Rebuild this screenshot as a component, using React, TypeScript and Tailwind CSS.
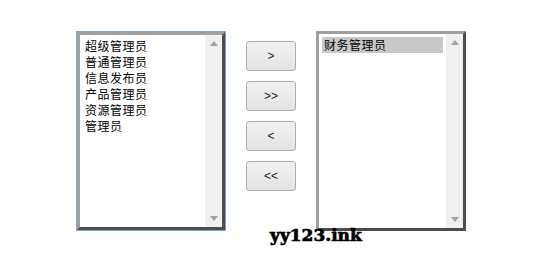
import React from 'react';

const leftItems = ['超级管理员', '普通管理员', '信息发布员', '产品管理员', '资源管理员', '管理员'];
const rightItems = ['财务管理员'];

const cjk = { fontFamily: '"Noto Sans CJK SC", "DejaVu Sans", sans-serif' };

const ScrollBar: React.FC = () => (
  <div className="w-[17px] h-full bg-[#f0f0f0] flex flex-col items-center justify-between py-[6px]">
    <svg width="8" height="5" viewBox="0 0 8 5"><path d="M0 5 L4 0 L8 5 Z" fill="#a3a3a3" /></svg>
    <svg width="8" height="5" viewBox="0 0 8 5"><path d="M0 0 L4 5 L8 0 Z" fill="#a3a3a3" /></svg>
  </div>
);

const ListBox: React.FC<{ items: string[]; selected?: number }> = ({ items, selected }) => (
  <div className="w-full h-full flex border-[3px] border-t-[#a0a0a0] border-l-[#a0a0a0] border-r-[#4d4d4d] border-b-[#4d4d4d] bg-white">
    <div className="flex-1 p-[3px] text-[12px] leading-[16px] text-black" style={cjk}>
      {items.map((it, i) => (
        <div key={i} className={`h-[16px] pl-[2px] whitespace-nowrap tracking-[0.5px] ${selected === i ? 'bg-[#c8c8c8]' : ''}`}>
          {it}
        </div>
      ))}
    </div>
    <ScrollBar />
  </div>
);

const Btn: React.FC<{ label: string }> = ({ label }) => (
  <button className="w-[50px] h-[30px] rounded-[3px] border border-[#adadad] bg-gradient-to-b from-[#f2f2f2] to-[#e3e3e3] text-[12px] text-[#222] leading-none" style={{ fontFamily: '"Liberation Sans", sans-serif' }}>
    {label}
  </button>
);

export default function App() {
  return (
    <div className="relative w-[540px] h-[254px] bg-white">
      <div className="flex items-start pt-[31px] pl-[76px] gap-[20px]">
        <div className="w-[150px] h-[200px] border border-[#7ea3d4]">
          <ListBox items={leftItems} />
        </div>
        <div className="flex flex-col gap-[10px] pt-[10px]">
          <Btn label=">" />
          <Btn label=">>" />
          <Btn label="<" />
          <Btn label="<<" />
        </div>
        <div className="w-[150px] h-[200px]">
          <ListBox items={rightItems} selected={0} />
        </div>
      </div>
      <div className="absolute left-[270px] top-[227px] text-[17px] leading-none font-bold text-black [-webkit-text-stroke:0.7px_black]" style={{ fontFamily: '"DejaVu Serif", serif' }}>
        yy123.ink
      </div>
    </div>
  );
}
